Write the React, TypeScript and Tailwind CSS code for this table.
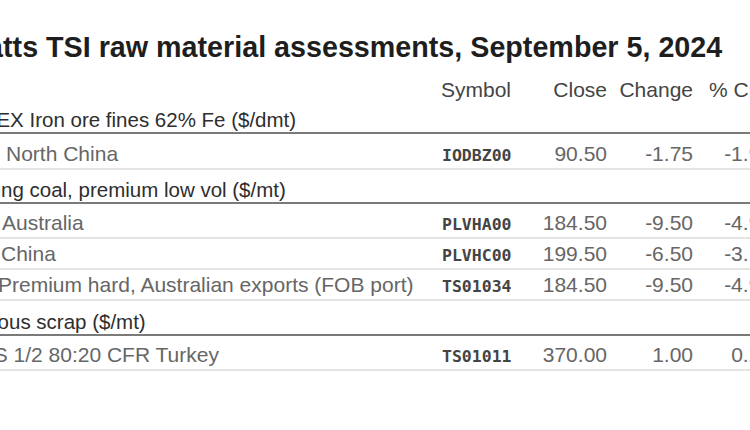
const sections = [
  {
    name: 'IODEX Iron ore fines 62% Fe ($/dmt)',
    h: 'h-[32px]',
    rows: [{ label: 'North China', indent: 'pl-[46px]', sym: 'IODBZ00', close: '90.50', chg: '-1.75', pct: '-1.90', h: 'h-[36px]' }],
  },
  {
    name: 'Coking coal, premium low vol ($/mt)',
    h: 'h-[34px]',
    rows: [
      { label: 'Australia', indent: 'pl-[42px]', sym: 'PLVHA00', close: '184.50', chg: '-9.50', pct: '-4.90', h: 'h-[35px]' },
      { label: 'China', indent: 'pl-[41px]', sym: 'PLVHC00', close: '199.50', chg: '-6.50', pct: '-3.15', h: 'h-[31px]' },
      { label: 'Premium hard, Australian exports (FOB port)', indent: 'pl-[38px]', sym: 'TS01034', close: '184.50', chg: '-9.50', pct: '-4.90', h: 'h-[31px]' },
    ],
  },
  {
    name: 'Ferrous scrap ($/mt)',
    h: 'h-[35px]',
    rows: [{ label: 'HMS 1/2 80:20 CFR Turkey', indent: 'pl-[1px]', sym: 'TS01011', close: '370.00', chg: '1.00', pct: '0.27', h: 'h-[35px]' }],
  },
];

const cols = 'grid grid-cols-[481px_100px_66px_86px_79px] items-baseline';

const App = () => {
  return (
    <div className="w-[750px] h-[430px] overflow-hidden bg-white font-['Liberation_Sans',Arial,sans-serif]">
      <div className="-ml-[40px] w-[812px]">
        <h1 className="pt-[29px] text-[28.7px] leading-[36px] font-bold text-[#1e1e1e] whitespace-nowrap">
          Platts TSI raw material assessments, September 5, 2024
        </h1>

        {/* column headers */}
        <div className={`${cols} mt-[13px] text-[21px] leading-[24px] text-[#444]`}>
          <span></span>
          <span>Symbol</span>
          <span className="text-right">Close</span>
          <span className="text-right">Change</span>
          <span className="text-right">% Chg</span>
        </div>

        {sections.map((s) => (
          <div key={s.name}>
            <div className={`${s.h} flex items-end border-b-2 border-[#7a7a7a] text-[20.5px] leading-[24px] text-[#2e2e2e] whitespace-nowrap`}>
              {s.name}
            </div>
            {s.rows.map((r) => (
              <div key={r.sym} className={`${r.h} flex items-end border-b-2 border-[#e4e4e4]`}>
                <div className={`${cols} w-full text-[21px] leading-[24px] text-[#666]`}>
                  <span className={`${r.indent} whitespace-nowrap`}>{r.label}</span>
                  <span className="font-['DejaVu_Sans_Mono',monospace] text-[16.5px] font-bold text-[#444] pl-[1px]">{r.sym}</span>
                  <span className="text-right">{r.close}</span>
                  <span className="text-right">{r.chg}</span>
                  <span className="text-right">{r.pct}</span>
                </div>
              </div>
            ))}
          </div>
        ))}
      </div>
    </div>
  );
};

export default App;
